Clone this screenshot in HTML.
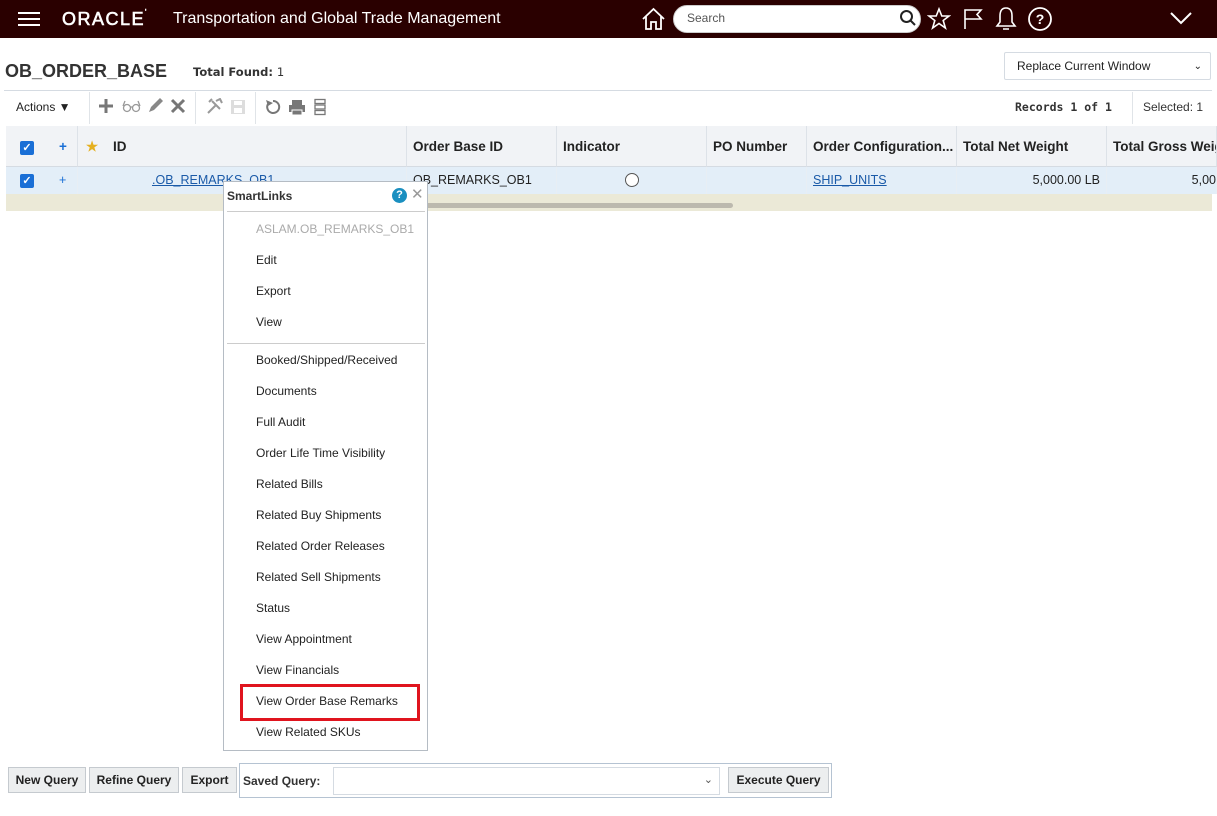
<!DOCTYPE html>
<html><head><meta charset="utf-8"><style>
*{box-sizing:border-box;margin:0;padding:0}
body{width:1217px;height:816px;position:relative;background:#fff;font-family:"Liberation Sans",sans-serif;font-size:13px;color:#222;overflow:hidden}
.a{position:absolute}
.hdr{left:0;top:0;width:1217px;height:38px;background:#2a0000}
.th{position:absolute;top:126px;height:41px;background:#f1f3f6;border-right:1px solid #dde2e8;border-bottom:1px solid #d5dbe2;font-weight:bold;font-size:13.5px;line-height:41px;padding-left:6px;color:#222}
.td{position:absolute;top:167px;height:27px;background:#e3eef8;border-right:1px solid #e8eef4;line-height:27px;padding-left:6px;font-size:12.5px}
.cb{display:inline-block;width:14px;height:14px;background:#1a6fd6;border-radius:2px;color:#fff;font-size:11px;line-height:14px;text-align:center;font-weight:bold}
.mi{position:absolute;left:32px;font-size:12px;color:#222}
.btn{position:absolute;top:767px;height:26px;background:#eceeef;border:1px solid #c5cacf;font-weight:bold;font-size:12px;line-height:24px;text-align:center;color:#222}
</style></head><body>
<div class="a hdr"></div>
<div class="a" style="left:18px;top:12px;width:22px;height:2px;background:#fff;box-shadow:0 6px 0 #fff,0 12px 0 #fff"></div>
<div class="a" style="left:62px;top:9px;color:#fff;font-size:18px;letter-spacing:1.5px;-webkit-text-stroke:0.6px #fff">ORACLE<span style="font-size:7px;vertical-align:top">'</span></div>
<div class="a" style="left:173px;top:10px;color:#fff;font-size:16px">Transportation and Global Trade Management</div>
<svg class="a" style="left:641px;top:7px" width="25" height="24" viewBox="0 0 25 24" fill="none" stroke="#fff" stroke-width="1.8"><path d="M2 12L12.5 2L23 12M5 9.5V22H10V15H15V22H20V9.5"/></svg>
<div class="a" style="left:673px;top:5px;width:248px;height:28px;background:#fff;border-radius:14px;border:1px solid #ccc"></div>
<div class="a" style="left:687px;top:11px;color:#555;font-size:12px">Search</div>
<svg class="a" style="left:899px;top:9px" width="18" height="18" viewBox="0 0 18 18" fill="none" stroke="#222" stroke-width="2"><circle cx="7.5" cy="7.5" r="5.5"/><path d="M11.5 11.5L16 16"/></svg>
<svg class="a" style="left:927px;top:7px" width="24" height="24" viewBox="0 0 24 24" fill="none" stroke="#fff" stroke-width="1.6"><path d="M12 2L14.8 9H22L16.2 13.5L18.4 21L12 16.5L5.6 21L7.8 13.5L2 9H9.2Z"/></svg>
<svg class="a" style="left:962px;top:7px" width="22" height="24" viewBox="0 0 22 24" fill="none" stroke="#fff" stroke-width="1.6"><path d="M3 22V3H19L15 7.5L19 12H3"/></svg>
<svg class="a" style="left:994px;top:5px" width="24" height="28" viewBox="0 0 24 28" fill="none" stroke="#fff" stroke-width="1.6"><path d="M12 3C7 3 6 7 6 11V17L3 21H21L18 17V11C18 7 17 3 12 3ZM9 24H15"/></svg>
<svg class="a" style="left:1027px;top:6px" width="26" height="26" viewBox="0 0 26 26" fill="none" stroke="#fff" stroke-width="1.8"><circle cx="13" cy="13" r="11"/><text x="13" y="18" text-anchor="middle" fill="#fff" stroke="none" font-size="14" font-family="Liberation Sans" font-weight="bold">?</text></svg>
<svg class="a" style="left:1169px;top:10px" width="24" height="16" viewBox="0 0 24 16" fill="none" stroke="#fff" stroke-width="2"><path d="M2 3L12 13L22 3"/></svg>

<div class="a" style="left:5px;top:61px;font-size:18px;font-weight:bold;color:#333">OB_ORDER_BASE</div>
<div class="a" style="left:193px;top:65px;font-size:11.5px;font-weight:bold;color:#333;font-family:'DejaVu Sans',sans-serif">Total Found: <span style="font-weight:normal">1</span></div>
<div class="a" style="left:1004px;top:52px;width:207px;height:28px;border:1px solid #d5dbe2;border-radius:2px;font-size:12px;line-height:27px;padding-left:12px">Replace Current Window<span style="position:absolute;right:8px;font-size:10px">&#8964;</span></div>
<div class="a" style="left:4px;top:90px;width:1208px;height:1px;background:#d5dbe2"></div>
<div class="a" style="left:16px;top:100px;font-size:12px">Actions &#9660;</div>
<div class="a" style="left:89px;top:92px;width:1px;height:32px;background:#e0e4e8"></div>
<svg class="a" style="left:98px;top:97px" width="92" height="18" viewBox="0 0 92 18">
<path d="M8 2V16M1 9H15" stroke="#777" stroke-width="3"/>
<g fill="none" stroke="#999" stroke-width="1.3"><circle cx="29" cy="11" r="3.5"/><circle cx="38" cy="11" r="3.5"/><path d="M25 9L27 4M42 9L40 4M32.5 10H34.5"/></g>
<path d="M51 15L53 10L62 1L65 4L56 13Z" fill="#888"/>
<path d="M74 3L86 15M86 3L74 15" stroke="#777" stroke-width="3"/>
</svg>
<div class="a" style="left:195px;top:92px;width:1px;height:32px;background:#e0e4e8"></div>
<svg class="a" style="left:206px;top:98px" width="42" height="18" viewBox="0 0 42 18">
<path d="M2 15L10 7M6 3L14 11M10 3L14 1L16 5M3 4L6 1" stroke="#999" stroke-width="2" fill="none"/>
<rect x="25" y="2" width="14" height="14" fill="#ddd"/><rect x="28" y="3" width="8" height="4" fill="#fff"/><rect x="28" y="10" width="8" height="5" fill="#fff"/>
</svg>
<div class="a" style="left:255px;top:92px;width:1px;height:32px;background:#e0e4e8"></div>
<svg class="a" style="left:264px;top:98px" width="66" height="18" viewBox="0 0 66 18">
<path d="M4 6A6 6 0 1 0 9 3" stroke="#777" stroke-width="2" fill="none"/><path d="M2 2L4 8L9 5Z" fill="#777"/>
<rect x="28" y="2" width="10" height="5" fill="#777"/><rect x="25" y="7" width="16" height="7" fill="#777"/><rect x="28" y="12" width="10" height="5" fill="#777" stroke="#fff" stroke-width="1"/>
<g fill="none" stroke="#777" stroke-width="1.3"><rect x="51" y="1.5" width="10" height="4"/><rect x="51" y="7" width="10" height="4"/><rect x="51" y="12.5" width="10" height="4"/></g>
</svg>
<div class="a" style="left:1015px;top:100px;font-size:11.5px;font-weight:bold;color:#333;font-family:'DejaVu Sans Mono',monospace">Records 1 of 1</div>
<div class="a" style="left:1132px;top:92px;width:1px;height:32px;background:#e0e4e8"></div>
<div class="a" style="left:1143px;top:100px;font-size:12px;color:#333">Selected: <span style="vertical-align:top">1</span></div>

<div class="th" style="left:6px;width:42px;padding-left:14px"><span class="cb">✓</span></div>
<div class="th" style="left:47px;width:31px;padding-left:12px;color:#1a6fd6">+</div>
<div class="th" style="left:78px;width:30px;padding-left:8px;color:#e5b020">★</div>
<div class="th" style="left:107px;width:300px">ID</div>
<div class="th" style="left:407px;width:150px">Order Base ID</div>
<div class="th" style="left:557px;width:150px">Indicator</div>
<div class="th" style="left:707px;width:100px">PO Number</div>
<div class="th" style="left:807px;width:150px">Order Configuration...</div>
<div class="th" style="left:957px;width:150px">Total Net Weight</div>
<div class="th" style="left:1107px;width:110px;white-space:nowrap;overflow:hidden">Total Gross Weight</div>

<div class="td" style="left:6px;width:42px;padding-left:14px"><span class="cb">✓</span></div>
<div class="td" style="left:47px;width:31px;padding-left:12px;color:#1a6fd6">+</div>
<div class="td" style="left:78px;width:30px"></div>
<div class="td" style="left:107px;width:300px;padding-left:45px"><u style="color:#1a5aa8">.OB_REMARKS_OB1</u></div>
<div class="td" style="left:407px;width:150px">OB_REMARKS_OB1</div>
<div class="td" style="left:557px;width:150px"><span style="position:absolute;left:68px;top:6px;width:14px;height:14px;border:1px solid #555;border-radius:50%;background:#fff"></span></div>
<div class="td" style="left:707px;width:100px"></div>
<div class="td" style="left:807px;width:150px"><u style="color:#1a5aa8">SHIP_UNITS</u></div>
<div class="td" style="left:957px;width:150px;text-align:right;padding-right:6px">5,000.00 LB</div>
<div class="td" style="left:1107px;width:110px;text-align:right;padding-right:0;overflow:hidden">5,00</div>
<div class="a" style="left:6px;top:194px;width:1206px;height:17px;background:#ebe9d7"></div>
<div class="a" style="left:330px;top:203px;width:403px;height:5px;background:#bcb9ae;border-radius:3px"></div>

<div class="a" style="left:223px;top:181px;width:205px;height:570px;background:#fff;border:1px solid #b5bcc4">
<div class="a" style="left:3px;top:7px;font-size:12px;font-weight:bold;color:#333">SmartLinks</div>
<div class="a" style="left:168px;top:6px;width:15px;height:15px;border-radius:50%;background:#1a8fc0;color:#fff;font-size:11px;font-weight:bold;text-align:center;line-height:15px">?</div>
<div class="a" style="left:187px;top:3px;font-size:15px;color:#999">✕</div>
<div class="a" style="left:3px;top:29px;width:198px;height:1px;background:#ccc"></div>
<div class="mi" style="top:40px;color:#aaa">ASLAM.OB_REMARKS_OB1</div>
<div class="mi" style="top:71px">Edit</div>
<div class="mi" style="top:102px">Export</div>
<div class="mi" style="top:133px">View</div>
<div class="a" style="left:3px;top:161px;width:198px;height:1px;background:#ccc"></div>
<div class="mi" style="top:171px">Booked/Shipped/Received</div>
<div class="mi" style="top:202px">Documents</div>
<div class="mi" style="top:233px">Full Audit</div>
<div class="mi" style="top:264px">Order Life Time Visibility</div>
<div class="mi" style="top:295px">Related Bills</div>
<div class="mi" style="top:326px">Related Buy Shipments</div>
<div class="mi" style="top:357px">Related Order Releases</div>
<div class="mi" style="top:388px">Related Sell Shipments</div>
<div class="mi" style="top:419px">Status</div>
<div class="mi" style="top:450px">View Appointment</div>
<div class="mi" style="top:481px">View Financials</div>
<div class="a" style="left:16px;top:502px;width:180px;height:37px;border:3px solid #e0141e"></div>
<div class="mi" style="top:512px">View Order Base Remarks</div>
<div class="mi" style="top:543px">View Related SKUs</div>
</div>

<div class="btn" style="left:8px;width:78px">New Query</div>
<div class="btn" style="left:89px;width:90px">Refine Query</div>
<div class="btn" style="left:182px;width:55px">Export</div>
<div class="a" style="left:239px;top:763px;width:593px;height:35px;border:1px solid #b5c3d2"></div>
<div class="a" style="left:243px;top:774px;font-size:12px;font-weight:bold;color:#333">Saved Query:</div>
<div class="a" style="left:333px;top:767px;width:387px;height:28px;border:1px solid #d5dbe2;background:#fff"><span style="position:absolute;right:6px;top:5px;font-size:11px;color:#555">&#8964;</span></div>
<div class="btn" style="left:728px;width:101px">Execute Query</div>
</body></html>
